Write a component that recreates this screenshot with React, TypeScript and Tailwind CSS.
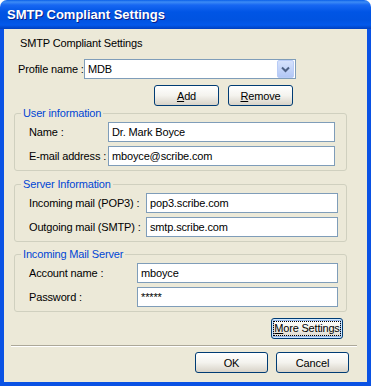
import React from "react";

const font = "font-['Liberation_Sans',Arial,sans-serif]";

function XpButton({ children, w, focus }: { children: React.ReactNode; w: string; focus?: boolean }) {
  return (
    <button
      className={`${w} h-[21px] rounded-[3px] border border-[#003C74] bg-linear-to-b from-[#FFFFFF] via-[#F4F3EE] to-[#D8D3C8] flex items-center justify-center whitespace-nowrap text-[11px] leading-[14px] text-black ${
        focus ? "shadow-[inset_0_0_0_1px_#CEE7FF,inset_0_0_0_2px_#98B8EA]" : ""
      }`}
    >
      {focus ? (
        <span className="border border-dotted border-black leading-[13px] tracking-[-0.2px]">{children}</span>
      ) : (
        children
      )}
    </button>
  );
}

function TextBox({ value, w }: { value: string; w: string }) {
  return (
    <div className={`${w} h-[20px] border border-[#7F9DB9] bg-white flex items-center pl-[3px] text-[11px] whitespace-nowrap`}>
      {value}
    </div>
  );
}

function Row({ label, labelW, value, inputW }: { label: string; labelW: string; value: string; inputW: string }) {
  return (
    <div className="flex items-center">
      <span className={`${labelW} shrink-0 whitespace-nowrap`}>{label}</span>
      <TextBox value={value} w={inputW} />
    </div>
  );
}

function Group({ title, className, children }: { title: string; className: string; children: React.ReactNode }) {
  return (
    <fieldset className={`ml-[10px] w-[333px] border border-[#D0D0BF] rounded-[3px] ${className}`}>
      <legend className="ml-[6px] px-[2px] text-[#0046D5] leading-[14px]">{title}</legend>
      <div className="pl-[14px] pt-[2px] pb-[4px] flex flex-col gap-[4px]">{children}</div>
    </fieldset>
  );
}

export default function App() {
  return (
    <div className={`w-[371px] h-[386px] flex flex-col ${font} text-[11px] leading-[14px] tracking-[-0.15px] text-black bg-white`}>
      <div className="h-[29px] shrink-0 rounded-t-[7px] bg-[linear-gradient(to_bottom,#0A5FE8_0px,#3D8CF5_2px,#1767F2_5px,#0055E5_12px,#0053E1_20px,#0359EB_25px,#0040C0_29px)] flex items-center pl-[7px]">
        <span className="text-white font-bold text-[13px] tracking-normal [text-shadow:1px_1px_#0A1E8A]">SMTP Compliant Settings</span>
      </div>

      <div className="flex-1 min-h-0 border-x-4 border-b-4 border-[#0A52E4] bg-[#ECE9D8] flex flex-col">
        <div className="mt-[7px] ml-[16px] whitespace-nowrap">SMTP Compliant Settings</div>

        <div className="mt-[9px] ml-[14px] flex items-center">
          <span className="w-[66px] shrink-0 whitespace-nowrap">Profile name :</span>
          <div className="w-[212px] h-[20px] border border-[#7F9DB9] bg-white flex items-center">
            <span className="pl-[3px] flex-1">MDB</span>
            <div className="w-[17px] h-[18px] mr-[1px] rounded-[2px] border border-[#B9CCF6] bg-linear-to-b from-[#D6E2FC] to-[#B2C7F5] flex items-center justify-center">
              <svg width="9" height="7" viewBox="0 0 9 7">
                <polyline points="1,1.5 4.5,5 8,1.5" fill="none" stroke="#4D6185" strokeWidth="2" />
              </svg>
            </div>
          </div>
        </div>

        <div className="mt-[6px] pl-[150px] flex gap-[9px]">
          <XpButton w="w-[65px]">
            <span className="underline">A</span>dd
          </XpButton>
          <XpButton w="w-[65px]">
            <span className="underline">R</span>emove
          </XpButton>
        </div>

        <Group title="User information" className="mt-0">
          <Row label="Name :" labelW="w-[79px]" value="Dr. Mark Boyce" inputW="w-[227px]" />
          <Row label="E-mail address :" labelW="w-[79px]" value="mboyce@scribe.com" inputW="w-[227px]" />
        </Group>

        <Group title="Server Information" className="mt-[6px]">
          <Row label="Incoming mail (POP3) :" labelW="w-[117px]" value="pop3.scribe.com" inputW="w-[192px]" />
          <Row label="Outgoing mail (SMTP) :" labelW="w-[117px]" value="smtp.scribe.com" inputW="w-[192px]" />
        </Group>

        <Group title="Incoming Mail Server" className="mt-[5px]">
          <Row label="Account name :" labelW="w-[108px]" value="mboyce" inputW="w-[201px]" />
          <Row label="Password :" labelW="w-[108px]" value="*****" inputW="w-[201px]" />
        </Group>

        <div className="mt-[6px] self-end mr-[24px]">
          <XpButton w="w-[72px]" focus>
            <span className="underline">M</span>ore Settings
          </XpButton>
        </div>

        <div className="mt-[6px] ml-[7px] mr-[10px] border-t border-t-[#ACA899] border-b border-b-white" />

        <div className="mt-[5px] self-end mr-[18px] flex gap-[8px]">
          <XpButton w="w-[73px]">OK</XpButton>
          <XpButton w="w-[73px]">Cancel</XpButton>
        </div>
      </div>
    </div>
  );
}
